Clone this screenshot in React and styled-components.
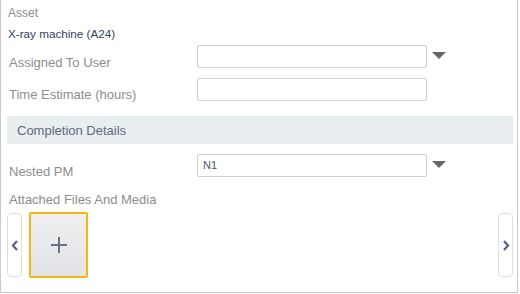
import React from "react";
import styled, { createGlobalStyle } from "styled-components";

const Global = createGlobalStyle`
  html, body { margin: 0; padding: 0; background: #fff; }
  body { font-family: "Liberation Sans", Arial, sans-serif; }
  * { box-sizing: border-box; }
`;

const Frame = styled.div`
  width: 518px;
  height: 293px;
  border: 1px solid #c9c9c9;
  border-top: none;
  padding: 5px 4px 0 6px;
  display: flex;
  flex-direction: column;
  overflow: hidden;
`;

const SmallLabel = styled.div`
  font-size: 12px;
  line-height: 16px;
  color: #8d8d8d;
  padding-left: 1px;
`;

const Value = styled.div`
  font-size: 11.7px;
  line-height: 16px;
  color: #35415f;
  margin-top: 5px;
  padding-left: 1px;
`;

const Row = styled.div`
  display: flex;
  align-items: flex-start;
  height: 23px;
  margin-top: ${(p) => p.$mt}px;
`;

const Label = styled.div`
  width: 190px;
  flex: none;
  font-size: 13px;
  line-height: 16px;
  color: #8d8d8d;
  padding-top: ${(p) => p.$pt}px;
  padding-left: 2px;
  white-space: nowrap;
`;

const Input = styled.div`
  width: 230px;
  height: 23px;
  border: 1px solid #cfcfd3;
  border-radius: 2px;
  background: #fff;
  font-size: 11px;
  line-height: 21px;
  color: #4a5568;
  padding-left: 5px;
`;

const Caret = styled.div`
  width: 0;
  height: 0;
  margin: 7px 0 0 5px;
  border-left: 7.5px solid transparent;
  border-right: 7.5px solid transparent;
  border-top: 7px solid #666;
`;

const Section = styled.div`
  margin-top: 15px;
  height: 28px;
  background: #e9eef1;
  display: flex;
  align-items: center;
  padding-left: 10px;
  font-size: 13px;
  color: #5b6b7c;
`;

const FilesLabel = styled(SmallLabel)`
  font-size: 13px;
  margin-top: 15px;
  padding-left: 2px;
`;

const Carousel = styled.div`
  display: flex;
  align-items: flex-start;
  margin-top: 4px;
`;

const NavButton = styled.div`
  width: 15px;
  height: 64px;
  margin-top: 1px;
  border: 1px solid #dedede;
  border-radius: 4px;
  background: #fff;
  display: flex;
  align-items: center;
  justify-content: center;
  flex: none;
`;

const Tiles = styled.div`
  flex: 1;
  display: flex;
  padding-left: 7px;
`;

const AddTile = styled.div`
  width: 59px;
  height: 66px;
  border: 2px solid #f6b60c;
  border-radius: 2px;
  background: linear-gradient(#f0f0f2, #e2e3e6);
  display: flex;
  align-items: center;
  justify-content: center;
`;

const Chevron = ({ dir }) => (
  <svg width="8" height="11" viewBox="0 0 8 11">
    <path
      d={dir === "left" ? "M6 1 L2 5.5 L6 10" : "M2 1 L6 5.5 L2 10"}
      fill="none"
      stroke="#56617d"
      strokeWidth="2.2"
    />
  </svg>
);

const Plus = () => (
  <svg width="16" height="16" viewBox="0 0 16 16">
    <path d="M8 0 V16 M0 8 H16" stroke="#6a7184" strokeWidth="2" />
  </svg>
);

export default function App() {
  return (
    <>
      <Global />
      <Frame>
        <SmallLabel>Asset</SmallLabel>
        <Value>X-ray machine (A24)</Value>
        <Row $mt={3}>
          <Label $pt={10}>Assigned To User</Label>
          <Input />
          <Caret />
        </Row>
        <Row $mt={10}>
          <Label $pt={9}>Time Estimate (hours)</Label>
          <Input />
        </Row>
        <Section>Completion Details</Section>
        <Row $mt={10}>
          <Label $pt={10}>Nested PM</Label>
          <Input>N1</Input>
          <Caret />
        </Row>
        <FilesLabel>Attached Files And Media</FilesLabel>
        <Carousel>
          <NavButton>
            <Chevron dir="left" />
          </NavButton>
          <Tiles>
            <AddTile>
              <Plus />
            </AddTile>
          </Tiles>
          <NavButton>
            <Chevron dir="right" />
          </NavButton>
        </Carousel>
      </Frame>
    </>
  );
}
